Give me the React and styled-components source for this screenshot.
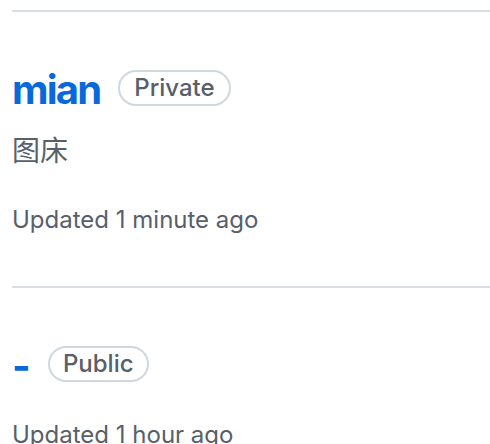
import React from "react";
import styled, { createGlobalStyle } from "styled-components";

const Global = createGlobalStyle`
  html, body { margin: 0; padding: 0; background: #ffffff; }
  body {
    font-family: Inter, "Noto Sans", "Noto Sans CJK SC", sans-serif;
    color: #1f2328;
    -webkit-font-smoothing: antialiased;
  }
`;

const Page = styled.div`
  padding-left: 12px;
  overflow: hidden;
  height: 444px;
`;

const List = styled.ul`
  list-style: none;
  margin: 0;
  padding: 0;
  border-top: 2px solid #d8dee4;
  margin-top: 10px;
`;

const Item = styled.li`
  display: flex;
  flex-direction: column;
  padding: 48px 0 48px 0;
  border-bottom: 2px solid #d8dee4;
`;

const TitleRow = styled.div`
  display: flex;
  align-items: center;
  gap: ${(p) => p.$gap}px;
  height: 60px;
  margin-bottom: 8px;
`;

const RepoLink = styled.a`
  font-size: 40px;
  font-weight: 700;
  color: #0969da;
  text-decoration: none;
  line-height: 60px;
  letter-spacing: -1.8px;
`;

const Label = styled.span`
  display: inline-flex;
  align-items: center;
  box-sizing: border-box;
  height: 36px;
  padding: 0 ${(p) => p.$pad}px;
  border: 2px solid #d0d7de;
  border-radius: 999px;
  font-size: 24px;
  font-weight: 500;
  color: #57606a;
  margin-top: -5px;
`;

const Desc = styled.p`
  margin: 0;
  font-size: 28px;
  line-height: 42px;
  color: #57606a;
  font-family: "Noto Sans CJK SC", sans-serif;
`;

const Meta = styled.div`
  margin-top: ${(p) => p.$mt}px;
  font-size: 24px;
  line-height: 36px;
  color: #57606a;
`;

const repos = [
  { name: "mian", vis: "Private", desc: "图床", updated: "Updated 1 minute ago", gap: 18, pad: 14 },
  { name: "-", vis: "Public", desc: null, updated: "Updated 1 hour ago", gap: 19, pad: 13 },
];

export default function App() {
  return (
    <Page>
      <Global />
      <List>
        {repos.map((r) => (
          <Item key={r.name}>
            <TitleRow $gap={r.gap}>
              <RepoLink href="#">{r.name}</RepoLink>
              <Label $pad={r.pad}>{r.vis}</Label>
            </TitleRow>
            {r.desc && <Desc>{r.desc}</Desc>}
            <Meta $mt={r.desc ? 32 : 13}>{r.updated}</Meta>
          </Item>
        ))}
      </List>
    </Page>
  );
}
